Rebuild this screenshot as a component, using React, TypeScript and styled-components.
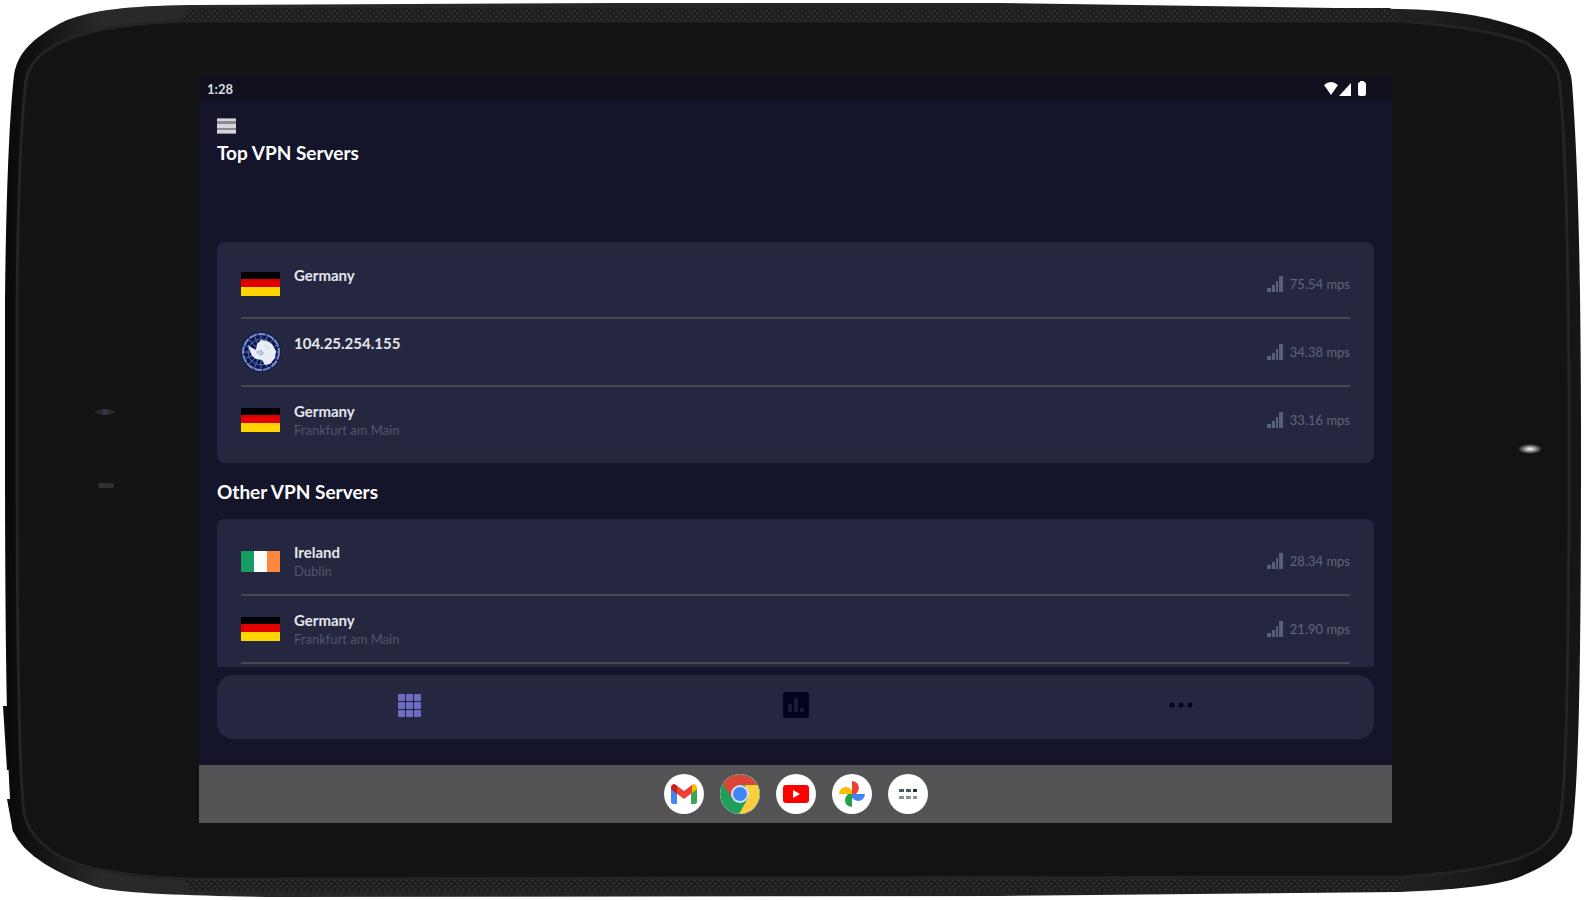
import React from "react";
import styled, { createGlobalStyle } from "styled-components";

const GlobalStyle = createGlobalStyle`
  *, *::before, *::after { box-sizing: border-box; }
  body { margin: 0; background: #fff; font-family: Lato, "Open Sans", sans-serif; }
  h1, h2, p, ul { margin: 0; padding: 0; }
  ul { list-style: none; }
  button { border: 0; padding: 0; background: none; font: inherit; color: inherit; cursor: pointer; }
  svg { display: block; }
`;

const Device = styled.div`
  position: relative;
  display: flex;
  height: 100vh;
  min-height: 600px;
  padding: 77px 192px 77px 199px;
  overflow: hidden;
`;

const Shell = styled.svg`
  position: absolute;
  inset: 0;
  width: 100%;
  height: 100%;
`;

const Screen = styled.div`
  position: relative;
  flex: 1;
  min-width: 0;
  display: flex;
  flex-direction: column;
  background: #14152a;
  color: #fff;
`;

const StatusBar = styled.header`
  display: flex;
  align-items: center;
  justify-content: space-between;
  height: 23px;
  padding: 0 25px 0 8px;
  background: #10101f;
  font-size: 13px;
  line-height: 16px;
  font-weight: 700;
  color: #dcdce0;
`;

const Content = styled.main`
  flex: 1;
  min-height: 0;
  overflow: hidden;
  padding: 0 18px;
`;

const MenuButton = styled.button`
  display: block;
  margin-top: 18px;
`;

const Title = styled.h1`
  margin-top: 7px;
  font-size: 19px;
  line-height: 24px;
  font-weight: 700;
`;

const Heading = styled.h2`
  margin-top: 17px;
  font-size: 19px;
  line-height: 24px;
  font-weight: 700;
`;

const Card = styled.ul<{ $gap: number }>`
  margin-top: ${(p) => p.$gap}px;
  padding: 9px 24px 8px;
  border-radius: 8px;
  background: #252640;
`;

const Row = styled.li`
  display: flex;
  align-items: center;
  height: 68px;
  border-bottom: 2px solid #474853;
  &:last-child { border-bottom-color: transparent; }
`;

const OpenCard = styled(Card)`
  ${Row}:last-child { border-bottom-color: #474853; }
`;

const FlagBox = styled.span`
  width: 40px;
  margin-right: 13px;
`;

const Names = styled.div`
  flex: 1;
  min-height: 38px;
`;

const Name = styled.p`
  font-size: 15px;
  line-height: 20px;
  font-weight: 700;
  color: #e6e6ec;
`;

const City = styled.p`
  font-size: 13px;
  line-height: 18px;
  color: #50566e;
`;

const Speed = styled.div`
  display: flex;
  align-items: center;
  gap: 7px;
  font-size: 13px;
  line-height: 18px;
  color: #5d667f;
`;

const TabBar = styled.nav`
  display: flex;
  height: 64px;
  margin: 8px 18px 26px;
  border-radius: 16px;
  background: #252640;
`;

const Tab = styled.button`
  flex: 1;
  display: flex;
  align-items: center;
  justify-content: center;
  padding-bottom: 4px;
`;

const Dock = styled.footer`
  display: flex;
  align-items: center;
  justify-content: center;
  gap: 16px;
  height: 58px;
  background: #545456;
`;

const AppButton = styled.button`
  display: flex;
  align-items: center;
  justify-content: center;
  width: 40px;
  height: 40px;
  border-radius: 50%;
  background: #fff;
  overflow: hidden;
`;

const DeviceShell = () => (
  <Shell viewBox="0 0 1584 900" preserveAspectRatio="none" aria-hidden="true">
    <defs>
      <pattern id="mesh" width="6" height="6" patternUnits="userSpaceOnUse">
        <rect width="6" height="6" fill="#1d1d1d" />
        <circle cx="1.5" cy="1.5" r="1" fill="#3b3b3b" />
        <circle cx="4.5" cy="4.5" r="1" fill="#3b3b3b" />
      </pattern>
      <radialGradient id="glint">
        <stop offset="0" stopColor="#fff" />
        <stop offset="0.3" stopColor="#bbb" />
        <stop offset="1" stopColor="#131313" />
      </radialGradient>
      <linearGradient id="rim" x1="0" x2="1" y1="0" y2="0">
        <stop offset="0" stopColor="#090909" />
        <stop offset="0.025" stopColor="#141414" />
        <stop offset="0.06" stopColor="#292929" />
        <stop offset="0.9" stopColor="#202020" />
        <stop offset="0.97" stopColor="#111" />
        <stop offset="1" stopColor="#161616" />
      </linearGradient>
    </defs>
    <path d="M3 706 H8 L14 770 H7 Z M7 799 H14 L20 836 L13 832 Z" fill="#0c0c0c" />
    <path
      d="M5 300 C6 200 9 120 14 75 C17 55 30 38 67 20 C95 10 125 6 190 5 L620 3 L1000 3 L1400 9
         C1450 10 1490 15 1534 33 C1558 46 1570 62 1572 83 C1577 150 1581 250 1581 450
         C1581 700 1578 780 1572 833 C1568 848 1552 866 1511 880 C1480 888 1440 890 1400 892
         L1000 896 L280 897 C200 896 130 894 100 888 C60 876 22 855 13 830 C8 800 5 690 5 450 Z"
      fill="url(#rim)"
    />
    <path
      d="M17 300 C18 200 21 120 26 80 C29 62 45 46 80 35 C110 26 145 22 190 21 L1400 21
         C1450 25 1495 32 1524 42 C1546 54 1558 64 1560 85 C1566 150 1569 280 1569 450
         C1569 640 1567 770 1561 813 C1558 834 1548 848 1520 858 C1490 868 1450 874 1400 877
         L190 879 C140 877 110 873 80 865 C50 855 28 836 24 813 C19 770 17 640 17 450 Z"
      fill="#131313"
      stroke="#242424"
      strokeWidth="3"
    />
    <path d="M190 8 H1390 L1404 20 H182 Z" fill="url(#mesh)" />
    <path d="M184 880 H1408 L1396 891 H192 Z" fill="url(#mesh)" />
    <ellipse cx="105" cy="412" rx="10" ry="3" fill="#28282b" />
    <circle cx="105" cy="412" r="3" fill="#34344c" />
    <rect x="98" y="483" width="16" height="5" rx="2" fill="#303030" />
    <ellipse cx="1530" cy="449" rx="12" ry="5" fill="url(#glint)" />
  </Shell>
);

const StatusIcons = () => (
  <svg width="44" height="18" viewBox="0 0 44 18" fill="#fff" role="img" aria-label="Wi-Fi, signal, battery">
    <path d="M1 5 Q8 -1 15 5 L8 15 Z" />
    <path d="M16 16 L28 3 V16 Z" />
    <path d="M37 1 h4 v1 q2 0 2 2 v10 q0 2 -2 2 h-4 q-2 0 -2 -2 v-10 q0 -2 2 -2 Z" />
  </svg>
);

const MenuIcon = () => (
  <svg width="19" height="16" viewBox="0 0 19 16">
    <rect width="19" height="16" fill="#8a8a90" />
    <path d="M0 1h19v2H0zM0 6h19v4H0zM0 12h19v3H0z" fill="#d6d6da" />
  </svg>
);

const SignalIcon = () => (
  <svg width="16" height="16" viewBox="0 0 16 16" fill="#56607b">
    <path d="M0 12h4v4H0zM5 9h3v7H5zM9 5h2v11H9zM12 0h4v16h-4z" />
  </svg>
);

const GermanyFlag = () => (
  <svg width="39" height="24" viewBox="0 0 39 24" role="img" aria-label="Germany flag">
    <rect width="39" height="8" fill="#000" />
    <rect y="7" width="39" height="9" fill="#e00000" />
    <rect y="15" width="39" height="9" fill="#ffd500" />
  </svg>
);

const IrelandFlag = () => (
  <svg width="39" height="21" viewBox="0 0 39 21" role="img" aria-label="Ireland flag">
    <rect width="13" height="21" fill="#169b62" />
    <rect x="13" width="13" height="21" fill="#fff" />
    <rect x="26" width="13" height="21" fill="#ff883e" />
  </svg>
);

const AntarcticaFlag = () => (
  <svg width="40" height="40" viewBox="0 0 40 40" role="img" aria-label="Antarctica">
    <circle cx="20" cy="20" r="20" fill="#0b1a55" />
    <circle cx="20" cy="20" r="18" fill="none" stroke="#8294bf" strokeWidth="2" strokeDasharray="8 1" />
    <circle cx="20" cy="20" r="13" fill="none" stroke="#5468a4" strokeWidth="1" />
    <path
      d="M20 2v36M2 20h36M7 7l26 26M33 7L7 33M13 3l14 34M27 3L13 37M3 13l34 14M37 13L3 27"
      stroke="#5d70a8"
      strokeWidth="1"
    />
    <path
      d="M7 13 L11 16 L15 18 L16 12 L20 8 L26 9 L31 12 L35 19 L34 26 L29 32 L24 33 L21 28 L15 27 L11 24 L9 19 Z"
      fill="#e9edf7"
    />
    <path d="M15 20 L20 18 L23 21 L20 24 Z M24 13 L28 17" fill="#bcc5dc" stroke="#bcc5dc" />
  </svg>
);

const GridIcon = () => (
  <svg width="23" height="23" viewBox="0 0 23 23" fill="#6d6dc4">
    {[0, 8, 16].map((y) => [0, 8, 16].map((x) => <rect key={`${x}-${y}`} x={x} y={y} width="7" height="7" rx="1" />))}
  </svg>
);

const ChartIcon = () => (
  <svg width="26" height="26" viewBox="0 0 26 26">
    <rect width="26" height="26" rx="3" fill="#03031e" />
    <path d="M5 12h4v8H5zM11 6h4v14h-4zM17 16h4v4h-4z" fill="#191a33" />
  </svg>
);

const MoreIcon = () => (
  <svg width="24" height="6" viewBox="0 0 24 6" fill="#03031e">
    <circle cx="3" cy="3" r="2.500" />
    <circle cx="12" cy="3" r="2.500" />
    <circle cx="21" cy="3" r="2.500" />
  </svg>
);

const GmailIcon = () => (
  <svg width="26" height="20" viewBox="0 0 26 20">
    <path d="M0 4v14q0 2 2 2h4V8z" fill="#4285f4" />
    <path d="M26 4v14q0 2-2 2h-4V8z" fill="#34a853" />
    <path d="M20 2v8l6-5V3q-1-3-4-3z" fill="#fbbc04" />
    <path d="M0 3q1-4 5-2l8 6 8-6v8l-8 6-8-6-5-4z" fill="#ea4335" />
    <path d="M0 3q1-4 5-2l1 1v8L0 5z" fill="#c5221f" />
  </svg>
);

const ChromeIcon = () => (
  <svg width="40" height="40" viewBox="0 0 40 40">
    <circle cx="20" cy="20" r="20" fill="#1fa05a" />
    <path d="M2.700 10 A20 20 0 0 1 37.300 11 L20 11 L12 24 Z" fill="#db4437" />
    <path d="M37.300 11 A20 20 0 0 1 19 40 L28 24 L25 11 Z" fill="#ffcd40" />
    <circle cx="20" cy="20" r="9" fill="#d5e3f5" />
    <circle cx="20" cy="20" r="7" fill="#4285f4" />
  </svg>
);

const YouTubeIcon = () => (
  <svg width="26" height="18" viewBox="0 0 26 18">
    <rect width="26" height="18" rx="3" fill="#f00" />
    <path d="M10 5l7 4-7 4z" fill="#fff" />
  </svg>
);

const PhotosIcon = () => (
  <svg width="26" height="28" viewBox="0 0 26 28">
    <path d="M13 14V1q7 1 7 7 0 3-3 6z" fill="#ea4335" />
    <path d="M13 14h13q-1 7-7 7-3 0-6-3z" fill="#4285f4" />
    <path d="M13 14v13q-7-1-7-7 0-3 3-6z" fill="#1ea446" />
    <path d="M13 14H0q1-7 7-7 3 0 6 3z" fill="#fbbc04" />
  </svg>
);

const DrawerIcon = () => (
  <svg width="20" height="12" viewBox="0 0 20 12">
    <path d="M1 1h5v3H1zM8 1h5v3H8z" fill="#3d6068" />
    <path d="M15 1h4v3h-4z" fill="#17343c" />
    <path d="M1 8h5v3H1zM8 8h5v3H8zM15 8h4v3h-4z" fill="#8c9194" />
  </svg>
);

type Server = { name: string; city?: string; speed: string; flag: React.ReactNode };

const topServers: Server[] = [
  { name: "Germany", speed: "75.54 mps", flag: <GermanyFlag /> },
  { name: "104.25.254.155", speed: "34.38 mps", flag: <AntarcticaFlag /> },
  { name: "Germany", city: "Frankfurt am Main", speed: "33.16 mps", flag: <GermanyFlag /> },
];

const otherServers: Server[] = [
  { name: "Ireland", city: "Dublin", speed: "28.34 mps", flag: <IrelandFlag /> },
  { name: "Germany", city: "Frankfurt am Main", speed: "21.90 mps", flag: <GermanyFlag /> },
];

const ServerRow = ({ server }: { server: Server }) => (
  <Row>
    <FlagBox>{server.flag}</FlagBox>
    <Names>
      <Name>{server.name}</Name>
      {server.city && <City>{server.city}</City>}
    </Names>
    <Speed>
      <SignalIcon />
      {server.speed}
    </Speed>
  </Row>
);

export default function App() {
  return (
    <>
      <GlobalStyle />
      <Device>
        <DeviceShell />
        <Screen>
          <StatusBar>
            <span>1:28</span>
            <StatusIcons />
          </StatusBar>
          <Content>
            <MenuButton aria-label="Menu"><MenuIcon /></MenuButton>
            <Title>Top VPN Servers</Title>
            <Card $gap={77}>
              {topServers.map((s, i) => <ServerRow key={i} server={s} />)}
            </Card>
            <Heading>Other VPN Servers</Heading>
            <OpenCard $gap={15}>
              {otherServers.map((s, i) => <ServerRow key={i} server={s} />)}
            </OpenCard>
          </Content>
          <TabBar>
            <Tab aria-label="Servers"><GridIcon /></Tab>
            <Tab aria-label="Statistics"><ChartIcon /></Tab>
            <Tab aria-label="More"><MoreIcon /></Tab>
          </TabBar>
          <Dock>
            <AppButton aria-label="Gmail"><GmailIcon /></AppButton>
            <AppButton aria-label="Chrome"><ChromeIcon /></AppButton>
            <AppButton aria-label="YouTube"><YouTubeIcon /></AppButton>
            <AppButton aria-label="Photos"><PhotosIcon /></AppButton>
            <AppButton aria-label="All apps"><DrawerIcon /></AppButton>
          </Dock>
        </Screen>
      </Device>
    </>
  );
}
